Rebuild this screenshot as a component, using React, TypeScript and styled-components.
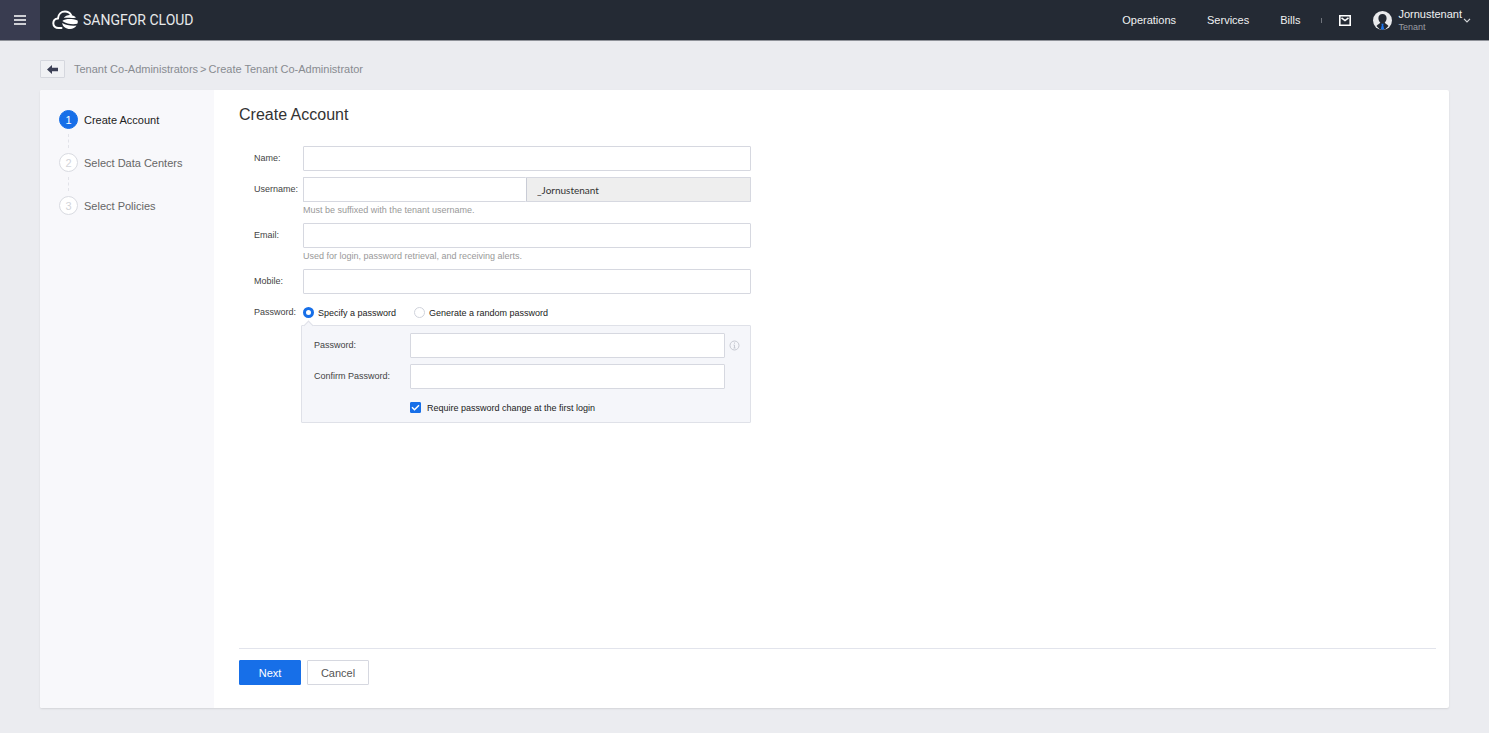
import React, { useState } from "react";
import styled, { createGlobalStyle } from "styled-components";

const sans = '"Liberation Sans", Arial, sans-serif';

const GlobalStyle = createGlobalStyle`
  *, *::before, *::after { box-sizing: border-box; }
  body { margin: 0; background: #ebecf0; font-family: ${sans}; color: #333; }
  button, input { font: inherit; }
`;

const Page = styled.div`
  min-height: 100vh;
  display: flex;
  flex-direction: column;
`;

const Header = styled.header`
  display: flex;
  align-items: center;
  height: 41px;
  background: #242a34;
  border-bottom: 1px solid #8f9299;
  color: #fff;
`;

const MenuButton = styled.button`
  display: grid;
  place-items: center;
  width: 40px;
  height: 40px;
  padding: 0;
  border: 0;
  background: #393c50;
  cursor: pointer;
`;

const Brand = styled.a`
  display: flex;
  align-items: center;
  gap: 4px;
  margin-left: 12px;
  color: #e8e9eb;
  font-family: Roboto, ${sans};
  font-size: 14px;
  line-height: 16px;
  text-decoration: none;
`;

const Nav = styled.nav`
  display: flex;
  gap: 31px;
  margin-left: auto;
`;

const NavLink = styled.a`
  color: #f0f1f2;
  font-size: 11px;
  line-height: 16px;
  text-decoration: none;
`;

const Tick = styled.span`
  width: 1px;
  height: 5px;
  margin: 0 17px 0 21px;
  background: #70747c;
`;

const IconButton = styled.button`
  display: flex;
  padding: 0;
  border: 0;
  background: none;
  cursor: pointer;
`;

const UserButton = styled(IconButton)`
  align-items: center;
  margin: 0 18px 0 22px;
  text-align: left;
`;

const UserText = styled.span`
  display: flex;
  flex-direction: column;
  margin: 0 1px 0 6px;
`;

const UserName = styled.span`
  color: #f0f1f2;
  font-size: 11px;
  line-height: 13px;
`;

const UserRole = styled.span`
  color: #9a9da3;
  font-size: 9px;
  line-height: 12px;
`;

const Content = styled.div`
  flex: 1;
  display: flex;
  flex-direction: column;
  padding: 19px 40px 25px;
`;

const Crumbs = styled.nav`
  display: flex;
  align-items: center;
  height: 18px;
  margin-bottom: 12px;
  color: #888b90;
  font-size: 11px;
  line-height: 16px;
`;

const BackButton = styled.button`
  display: grid;
  place-items: center;
  width: 25px;
  height: 18px;
  margin-right: 9px;
  padding: 0;
  border: 1px solid #d5d7de;
  border-radius: 1px;
  background: #f0f1f4;
  cursor: pointer;
`;

const CrumbLink = styled.a`
  color: inherit;
  text-decoration: none;
`;

const Separator = styled.span`
  margin: 0 2px;
`;

const Card = styled.div`
  flex: 1;
  display: flex;
  border-radius: 2px;
  background: #fff;
  box-shadow: 0 1px 2px rgba(0, 0, 0, 0.1);
`;

const Steps = styled.ol`
  flex: 0 0 174px;
  display: flex;
  flex-direction: column;
  gap: 24px;
  margin: 0;
  padding: 20px 0 0 19px;
  border-radius: 2px 0 0 2px;
  background: #f8f8fb;
  list-style: none;
`;

const Step = styled.li<{ $active?: boolean }>`
  position: relative;
  display: flex;
  align-items: center;
  gap: 6px;
  height: 19px;
  color: ${(p) => (p.$active ? "#222" : "#666")};
  font-size: 11px;
  line-height: 16px;

  &:not(:last-child)::after {
    content: "";
    position: absolute;
    left: 9px;
    top: 24px;
    height: 14px;
    border-left: 1px dashed #e2e3e9;
  }
`;

const StepNumber = styled.span<{ $active?: boolean }>`
  display: grid;
  place-items: center;
  width: 19px;
  height: 19px;
  border: 1px solid ${(p) => (p.$active ? "#176fe8" : "#d9dbe1")};
  border-radius: 50%;
  background: ${(p) => (p.$active ? "#176fe8" : "#fff")};
  color: ${(p) => (p.$active ? "#fff" : "#d3d5da")};
`;

const Main = styled.main`
  flex: 1;
  display: flex;
  flex-direction: column;
  padding: 14px 13px 23px 25px;
`;

const Title = styled.h1`
  margin: 0 0 20px;
  color: #333;
  font-size: 16px;
  font-weight: 400;
  line-height: 22px;
`;

const Form = styled.form`
  flex: 1;
  display: flex;
  flex-direction: column;
`;

const Fields = styled.div`
  display: flex;
  flex-direction: column;
  gap: 6px;
  width: 512px;
  max-width: 100%;
  padding-left: 15px;
  font-size: 9px;
`;

const Row = styled.div<{ $label: number }>`
  display: grid;
  grid-template-columns: ${(p) => p.$label}px minmax(0, 1fr);
`;

const Label = styled.label`
  color: #444;
  line-height: 25px;
  white-space: nowrap;
`;

const TextInput = styled.input`
  display: block;
  width: 100%;
  height: 25px;
  padding: 0 8px;
  border: 1px solid #d6d8e0;
  border-radius: 1px;
  background: #fff;
  color: #333;
  outline: none;

  &:focus { border-color: #176fe8; }
`;

const Suffix = styled(TextInput)`
  padding: 0 10px;
  border-left-color: #c9ccd6;
  background: #eee;
  font-family: Lato, "Open Sans", sans-serif;
  font-size: 10px;
`;

const Pair = styled.div`
  display: grid;
  grid-template-columns: minmax(0, 1fr) 225px;

  & > :first-child { border-right: 0; }
`;

const Hint = styled.p`
  margin: 0;
  padding-top: 2px;
  color: #999;
  line-height: 13px;
`;

const Options = styled.div`
  display: flex;
  gap: 18px;
  height: 25px;
`;

const Option = styled.label<{ $gap: number }>`
  display: flex;
  align-items: center;
  gap: ${(p) => p.$gap}px;
  height: 25px;
  color: #222;
`;

const Radio = styled.input`
  appearance: none;
  width: 11px;
  height: 11px;
  margin: 0;
  border: 1px solid #d0d3dc;
  border-radius: 50%;
  background: #fff;

  &:checked { border: 3px solid #176fe8; }
`;

const CheckInput = styled.input`
  grid-area: 1 / 1;
  appearance: none;
  width: 11px;
  height: 11px;
  margin: 0;
  border: 1px solid #d0d3dc;
  border-radius: 1px;
  background: #fff;

  &:checked { border-color: #176fe8; background: #176fe8; }
`;

const CheckBox = styled.span`
  display: grid;
  place-items: center;

  svg { grid-area: 1 / 1; pointer-events: none; z-index: 1; }
`;

const Panel = styled.div`
  position: relative;
  display: flex;
  flex-direction: column;
  gap: 6px;
  margin-left: -2px;
  padding: 7px 0 2px 12px;
  border: 1px solid #dfe1e8;
  border-radius: 1px;
  background: #f5f6fa;

  &::before {
    content: "";
    position: absolute;
    left: 3px;
    top: -4px;
    width: 7px;
    height: 7px;
    border: 1px solid #dfe1e8;
    border-right: 0;
    border-bottom: 0;
    background: #f5f6fa;
    transform: rotate(45deg);
  }
`;

const WithInfo = styled.div`
  display: grid;
  grid-template-columns: minmax(0, 1fr) 25px;
  align-items: center;

  svg { margin-left: 4px; }
`;

const Footer = styled.footer`
  display: flex;
  gap: 6px;
  margin-top: auto;
  padding-top: 11px;
  border-top: 1px solid #e2e4ec;
`;

const Button = styled.button<{ $primary?: boolean }>`
  width: 62px;
  height: 25px;
  padding: 0;
  border: 1px solid ${(p) => (p.$primary ? "#176fe8" : "#d6d8e0")};
  border-radius: 1px;
  background: ${(p) => (p.$primary ? "#176fe8" : "#fff")};
  color: ${(p) => (p.$primary ? "#fff" : "#555")};
  font-size: 11px;
  cursor: pointer;
`;

const CloudLogo = () => (
  <svg width="27" height="20" viewBox="0 0 27 20" aria-hidden="true">
    <path
      d="M9.500 18H6.600C3.500 18 1.300 16 1.300 13.300c0-2.700 2-4.700 4.700-4.900C6.300 4.500 9.200 1.600 13 1.600c2.700 0 4.900 1.300 6 3.400"
      fill="none" stroke="#fff" strokeWidth="2" strokeLinecap="round"
    />
    <path d="M11.800 8C13 6 15.300 5 18 5c2.500 0 4.600.9 6 2.500-4 1.200-8.200-.3-12.200.5z" fill="#fff" />
    <path d="M10.300 10.900c3.400-2.200 9-2.600 15.300-.4.400 1.300.2 2.300-.3 3.300-5.500 1.200-10.500-.2-15-2.900z" fill="#fff" />
    <path d="M10.200 13c3.900 2.200 9 3.300 14.300 2.600-1.300 2.200-3.600 3.400-6.500 3.400-4.200 0-7.500-2.400-7.800-6z" fill="#fff" />
  </svg>
);

export default function App() {
  const [mode, setMode] = useState("specify");
  const [required, setRequired] = useState(true);

  return (
    <Page>
      <GlobalStyle />
      <Header>
        <MenuButton aria-label="Menu">
          <svg width="12" height="10" viewBox="0 0 12 10" stroke="#fff" strokeWidth="1.600">
            <path d="M0 1h12M0 5h12M0 9h12" />
          </svg>
        </MenuButton>
        <Brand href="#">
          <CloudLogo />
          SANGFOR CLOUD
        </Brand>
        <Nav>
          <NavLink href="#">Operations</NavLink>
          <NavLink href="#">Services</NavLink>
          <NavLink href="#">Bills</NavLink>
        </Nav>
        <Tick />
        <IconButton aria-label="Messages">
          <svg width="12" height="11" viewBox="0 0 12 11" fill="none" stroke="#fff" strokeWidth="1.600">
            <path d="M.8.8h10.400v9.400H.800z" />
            <path d="M2.500 2.800 6 5.600l3.500-2.800" />
          </svg>
        </IconButton>
        <UserButton>
          <svg width="19" height="19" viewBox="0 0 19 19" aria-hidden="true">
            <circle cx="9.500" cy="9.500" r="9.500" fill="#e9eaec" />
            <path
              d="M9.500 3C6.900 3 5.400 4.900 5.400 7.300c0 1.900.8 3.400 1.900 4.300-.3 1.300-2.300 1.500-3.800 3.300A9.500 9.500 0 0 0 9.500 19a9.500 9.500 0 0 0 6-4.100c-1.500-1.800-3.500-2-3.800-3.300 1.100-.900 1.900-2.400 1.900-4.300C13.600 4.900 12.100 3 9.500 3z"
              fill="#242a34"
            />
            <path d="M8.300 12.800h2.400l-.5 1.500.9 3.500-1.600 1.200-1.600-1.200.9-3.500z" fill="#1b74ee" />
          </svg>
          <UserText>
            <UserName>Jornustenant</UserName>
            <UserRole>Tenant</UserRole>
          </UserText>
          <svg width="8" height="5" viewBox="0 0 8 5" fill="none" stroke="#d5d7da" strokeWidth="1.200">
            <path d="M1 .800 4 3.800l3-3" />
          </svg>
        </UserButton>
      </Header>

      <Content>
        <Crumbs aria-label="Breadcrumb">
          <BackButton aria-label="Back">
            <svg width="11" height="9" viewBox="0 0 11 9">
              <path d="M0 4.500 5 0v2.800h6v3.400H5V9z" fill="#3b3f55" />
            </svg>
          </BackButton>
          <CrumbLink href="#">Tenant Co-Administrators</CrumbLink>
          <Separator>&gt;</Separator>
          <span>Create Tenant Co-Administrator</span>
        </Crumbs>

        <Card>
          <Steps>
            <Step $active>
              <StepNumber $active>1</StepNumber>Create Account
            </Step>
            <Step>
              <StepNumber>2</StepNumber>Select Data Centers
            </Step>
            <Step>
              <StepNumber>3</StepNumber>Select Policies
            </Step>
          </Steps>

          <Main>
            <Title>Create Account</Title>
            <Form onSubmit={(e) => e.preventDefault()}>
              <Fields>
                <Row $label={49}>
                  <Label htmlFor="name">Name:</Label>
                  <TextInput id="name" />
                </Row>
                <Row $label={49}>
                  <Label htmlFor="username">Username:</Label>
                  <div>
                    <Pair>
                      <TextInput id="username" />
                      <Suffix readOnly value="_Jornustenant" aria-label="Username suffix" />
                    </Pair>
                    <Hint>Must be suffixed with the tenant username.</Hint>
                  </div>
                </Row>
                <Row $label={49}>
                  <Label htmlFor="email">Email:</Label>
                  <div>
                    <TextInput id="email" type="email" />
                    <Hint>Used for login, password retrieval, and receiving alerts.</Hint>
                  </div>
                </Row>
                <Row $label={49}>
                  <Label htmlFor="mobile">Mobile:</Label>
                  <TextInput id="mobile" type="tel" />
                </Row>
                <Row $label={49} role="radiogroup" aria-labelledby="mode-label">
                  <Label as="span" id="mode-label">Password:</Label>
                  <div>
                    <Options>
                      <Option $gap={4}>
                        <Radio type="radio" name="mode" checked={mode === "specify"} onChange={() => setMode("specify")} />
                        Specify a password
                      </Option>
                      <Option $gap={4}>
                        <Radio type="radio" name="mode" checked={mode === "random"} onChange={() => setMode("random")} />
                        Generate a random password
                      </Option>
                    </Options>
                    <Panel>
                      <Row $label={96}>
                        <Label htmlFor="password">Password:</Label>
                        <WithInfo>
                          <TextInput id="password" type="password" />
                          <svg width="11" height="11" viewBox="0 0 11 11" fill="none" stroke="#c6c9d1">
                            <circle cx="5.500" cy="5.500" r="4.500" />
                            <path d="M5.500 2.500v1.200M4.500 5h1v3M4.500 8h2" />
                          </svg>
                        </WithInfo>
                      </Row>
                      <Row $label={96}>
                        <Label htmlFor="confirm">Confirm Password:</Label>
                        <WithInfo>
                          <TextInput id="confirm" type="password" />
                        </WithInfo>
                      </Row>
                      <Row $label={96}>
                        <span />
                        <Option $gap={6}>
                          <CheckBox>
                            <CheckInput type="checkbox" checked={required} onChange={() => setRequired(!required)} />
                            <svg width="9" height="7" viewBox="0 0 9 7" fill="none" stroke="#fff" strokeWidth="1.500">
                              <path d="M1 3.300 3.500 5.700 8 1.200" />
                            </svg>
                          </CheckBox>
                          Require password change at the first login
                        </Option>
                      </Row>
                    </Panel>
                  </div>
                </Row>
              </Fields>
              <Footer>
                <Button type="submit" $primary>Next</Button>
                <Button type="button">Cancel</Button>
              </Footer>
            </Form>
          </Main>
        </Card>
      </Content>
    </Page>
  );
}
